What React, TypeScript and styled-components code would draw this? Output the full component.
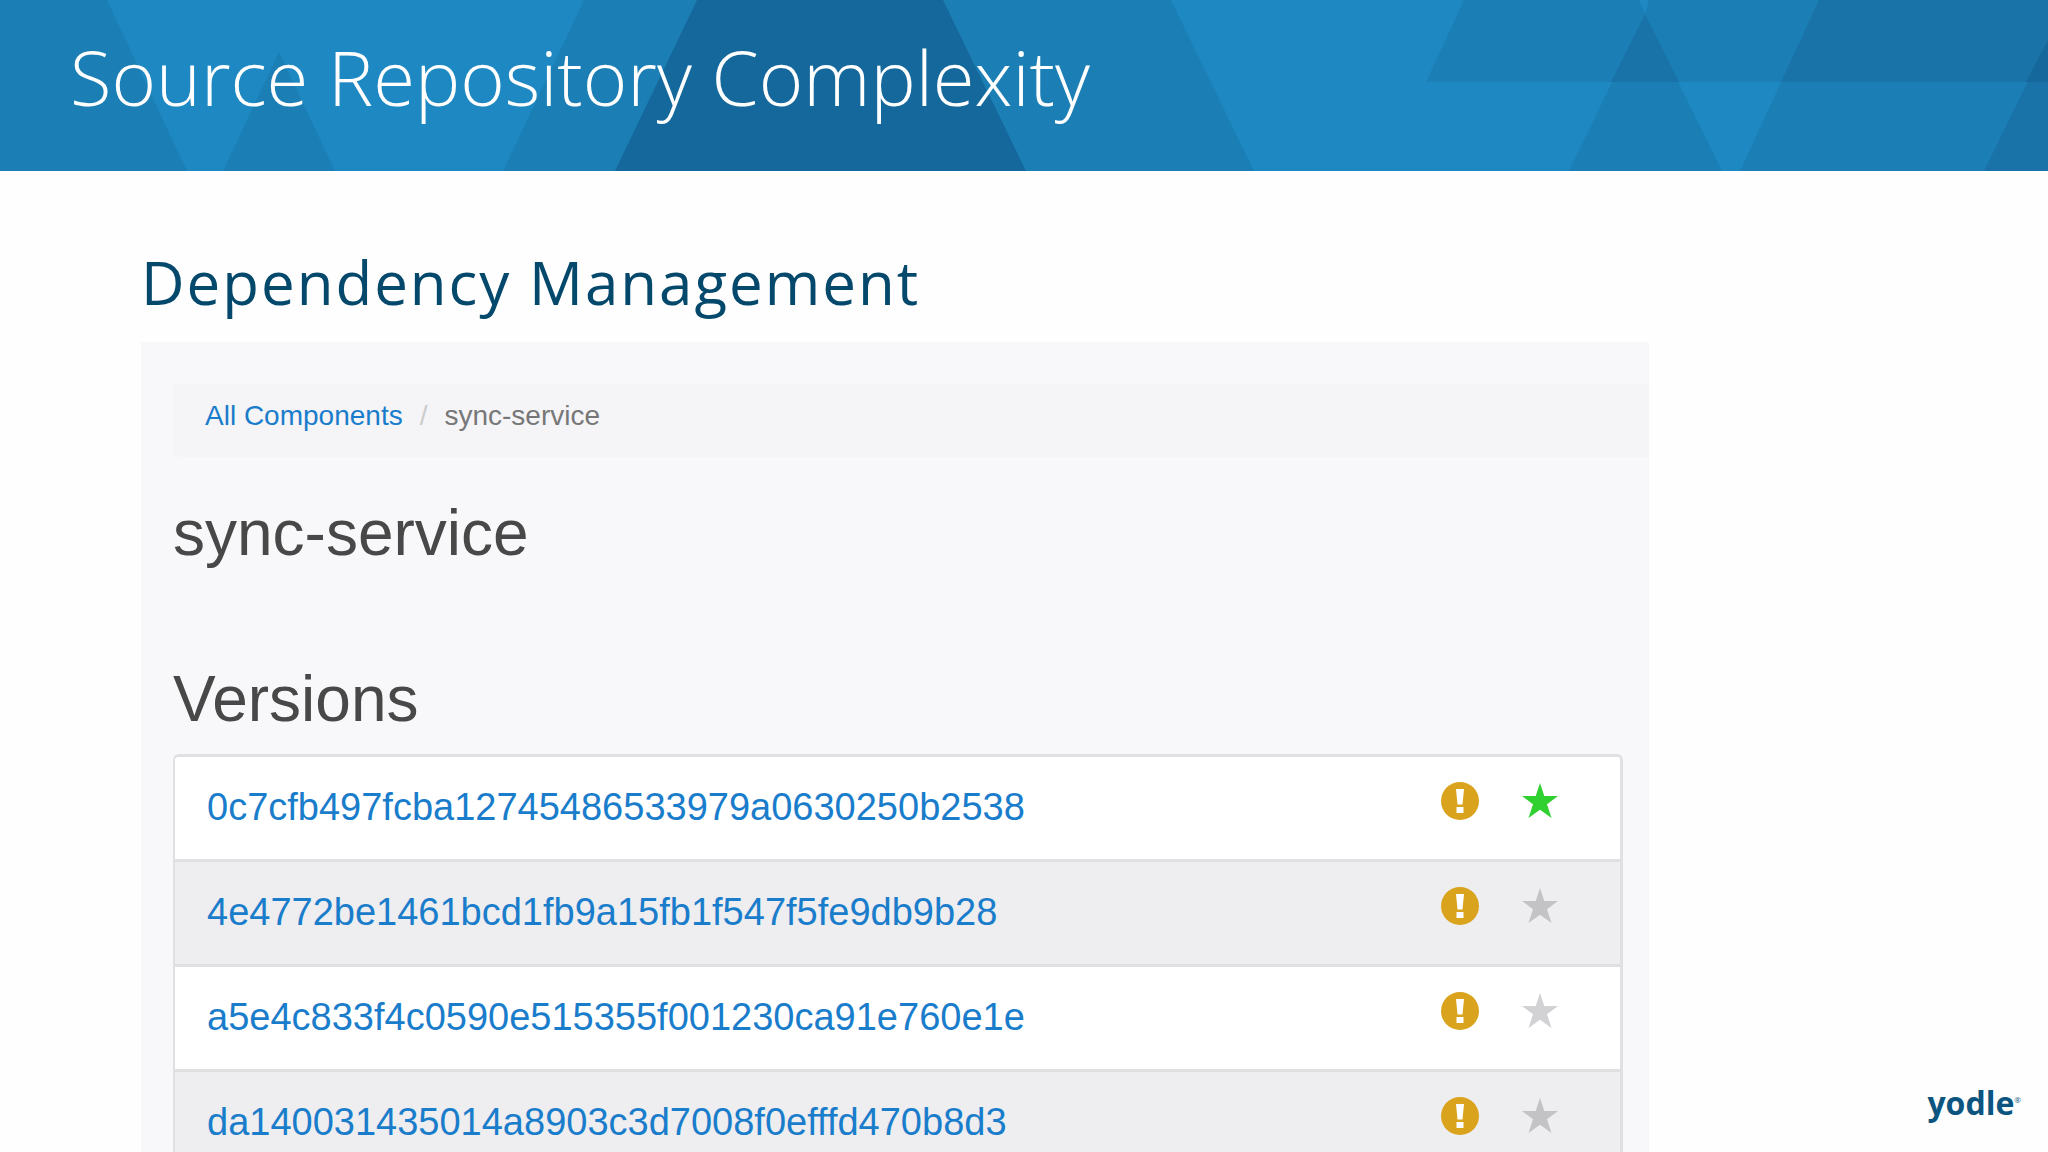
import React from "react";
import styled, { createGlobalStyle } from "styled-components";

const GlobalStyle = createGlobalStyle`
  * { box-sizing: border-box; }
  body { margin: 0; background: #fefefe; }
  h1, h2, h3, ol, ul { margin: 0; padding: 0; font-weight: 400; }
  ol, ul { list-style: none; }
`;

const slideFont = `"Open Sans", "Noto Sans", sans-serif`;
const appFont = `"Liberation Sans", Arial, sans-serif`;

const Slide = styled.div`
  display: flex;
  flex-direction: column;
  height: 100vh;
  overflow: hidden;
  background: #fefefe;
`;

const Header = styled.header`
  position: relative;
  flex: none;
  padding: 25px 70px 42px;
  background: #1e88c3;
  overflow: hidden;
`;

const Pattern = styled.svg`
  position: absolute;
  inset: 0;
  width: 100%;
  height: 100%;
`;

const Title = styled.h1`
  position: relative;
  font: 300 76px/104px ${slideFont};
  color: #fff;
`;

const Body = styled.div`
  display: flex;
  flex: 1;
  min-height: 0;
`;

const Main = styled.main`
  display: flex;
  flex-direction: column;
  flex: 1;
  min-width: 0;
  padding: 70px 0 0 141px;
  overflow: hidden;
`;

const Side = styled.aside`
  display: flex;
  flex: none;
  align-items: flex-end;
  justify-content: flex-end;
  width: 399px;
  padding: 0 27px 27px 0;
`;

const Subtitle = styled.h2`
  flex: none;
  margin-bottom: 19px;
  font: 400 60px/82px ${slideFont};
  letter-spacing: 2px;
  color: #04486b;
`;

const Panel = styled.section`
  flex: none;
  padding: 42px 0 0 32px;
  background: #f8f7fa;
  font-family: ${appFont};
`;

const Breadcrumb = styled.nav`
  padding: 11px 32px 21px;
  border-radius: 6px 0 0 6px;
  background: #f5f4f7;
  font-size: 28px;
  line-height: 41px;

  ol { display: flex; }
  li + li::before {
    content: "/";
    padding: 0 17px;
    color: #ccc;
  }
`;

const Crumb = styled.li`
  color: #777;
`;

const Link = styled.a`
  color: #1a7dcb;
  text-decoration: none;
`;

const Heading = styled.h3<{ $gap: number }>`
  margin-top: ${(p) => p.$gap}px;
  font-size: 64px;
  line-height: 70px;
  color: #484848;
`;

const VersionList = styled.ul`
  margin: 20px 26px 0 0;
  border: 3px solid #e0dfe2;
  border-width: 3px 3px 0 2px;
  border-radius: 6px 6px 0 0;
  overflow: hidden;
`;

const Version = styled.li`
  display: flex;
  align-items: flex-start;
  height: 105px;
  padding: 26px 61px 0 32px;
  border-bottom: 3px solid #e0dfe2;
  background: #fff;
  font-size: 38px;
  line-height: 48px;

  &:nth-child(even) { background: #eeedef; }
`;

const Marks = styled.span`
  display: flex;
  align-items: center;
  gap: 42px;
  height: 36px;
  margin-left: auto;
`;

const Logo = styled.span`
  display: flex;
  align-items: flex-start;
  font: 700 32px/44px ${slideFont};
  color: #0b5580;

  sup {
    margin-top: 14px;
    font-size: 8px;
    line-height: 10px;
    font-weight: 400;
  }
`;

const versions = [
  { hash: "0c7cfb497fcba12745486533979a0630250b2538", star: "#2fd02f" },
  { hash: "4e4772be1461bcd1fb9a15fb1f547f5fe9db9b28", star: "#c3c2c4" },
  { hash: "a5e4c833f4c0590e515355f001230ca91e760e1e", star: "#d2d1d3" },
  { hash: "da140031435014a8903c3d7008f0efffd470b8d3", star: "#c3c2c4" },
];

function AlertIcon() {
  return (
    <svg width="38" height="38" viewBox="0 0 38 38" role="img" aria-label="Warning">
      <circle cx="19" cy="19" r="19" fill="#daa31e" />
      <path d="M15 7h8l-1.500 15.500h-5zM15.500 25h7v6h-7z" fill="#fff" />
    </svg>
  );
}

function StarIcon({ color }: { color: string }) {
  return (
    <svg width="38" height="38" viewBox="0 0 38 38" role="img" aria-label="Star">
      <path
        d="M19 1l4.300 13H37L26 22.200 30.500 36 19 27.700 7.500 36 12 22.200 1 14h13.700z"
        fill={color}
      />
    </svg>
  );
}

function HeaderPattern() {
  return (
    <Pattern viewBox="0 0 2048 171" preserveAspectRatio="none" aria-hidden="true">
      <g fill="#1b7fb5">
        <polygon points="0,0 107,0 187,171 0,171" />
        <polygon points="279,52 335,171 223,171" />
        <polygon points="584,0 1171,0 1254,171 503,171" />
        <polygon points="1464,0 1639,0 1645,14 1649,0 2048,0 2048,82 1426,82" />
        <polygon points="1645,14 1722,171 1569,171" />
        <polygon points="1819,0 2048,0 2048,171 1740,171" />
      </g>
      <g fill="#1a73a8">
        <polygon points="1645,14 1679,82 1611,82" />
        <polygon points="1819,0 2048,0 2048,82 1781,82" />
        <polygon points="2048,40 2048,171 1984,171" />
      </g>
      <g fill="#15689b">
        <polygon points="697,0 943,0 1026,171 615,171" />
        <polygon points="2048,40 2048,82 2026,82" />
      </g>
    </Pattern>
  );
}

export default function App() {
  return (
    <Slide>
      <GlobalStyle />
      <Header>
        <HeaderPattern />
        <Title>Source Repository Complexity</Title>
      </Header>
      <Body>
        <Main>
          <Subtitle>Dependency Management</Subtitle>
          <Panel>
            <Breadcrumb aria-label="Breadcrumb">
              <ol>
                <Crumb><Link href="#components">All Components</Link></Crumb>
                <Crumb aria-current="page">sync-service</Crumb>
              </ol>
            </Breadcrumb>
            <Heading $gap={41}>sync-service</Heading>
            <Heading $gap={96}>Versions</Heading>
            <VersionList>
              {versions.map((v) => (
                <Version key={v.hash}>
                  <Link href={`#${v.hash}`}>{v.hash}</Link>
                  <Marks>
                    <AlertIcon />
                    <StarIcon color={v.star} />
                  </Marks>
                </Version>
              ))}
            </VersionList>
          </Panel>
        </Main>
        <Side>
          <Logo>yodle<sup>®</sup></Logo>
        </Side>
      </Body>
    </Slide>
  );
}
